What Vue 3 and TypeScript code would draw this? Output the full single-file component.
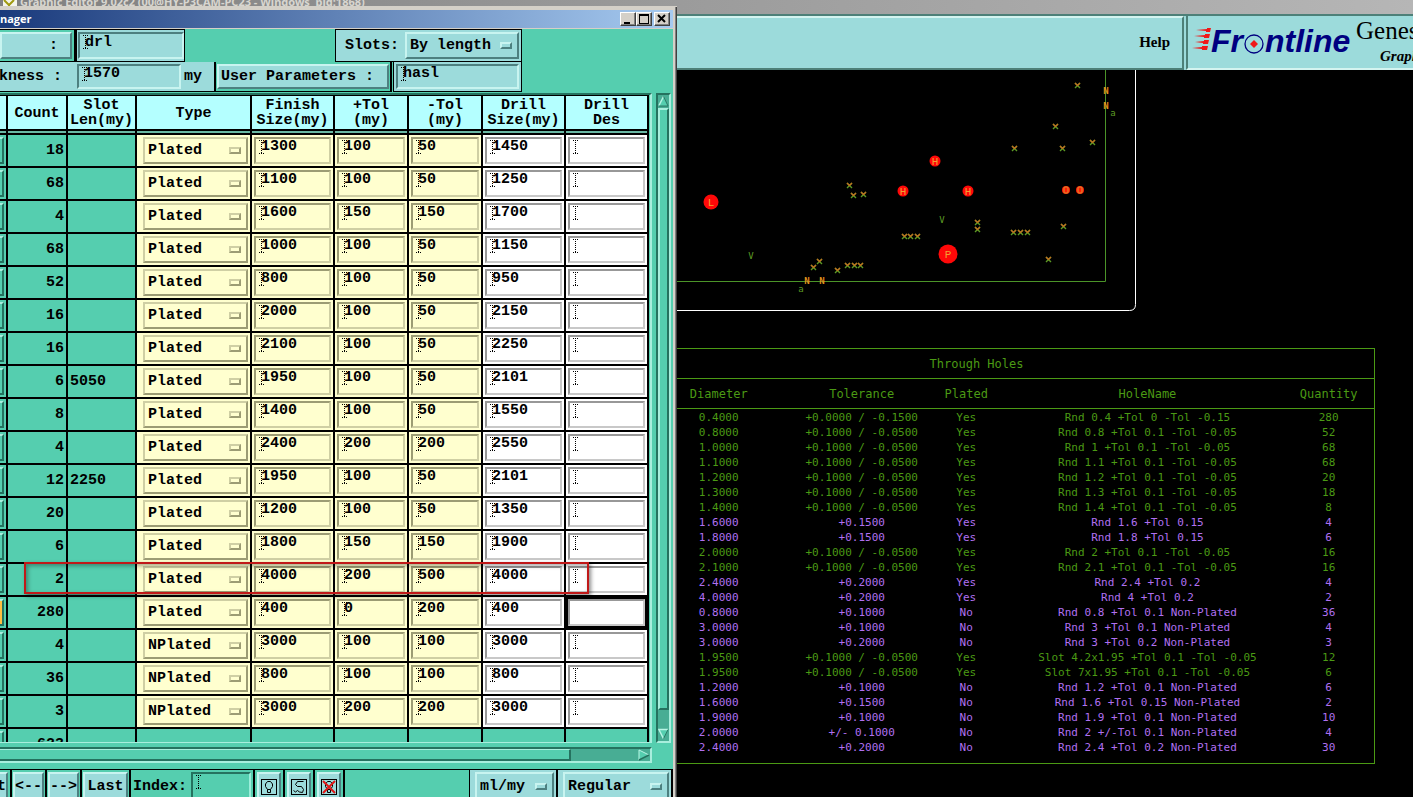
<script setup lang="ts">
import { ref } from 'vue'

interface Tool {
  count: number
  slot: string
  type: 'Plated' | 'NPlated'
  finish: string
  plus: string
  minus: string
  drill: string
}

interface Hole {
  dia: string
  tol: string
  plated: string
  name: string
  qty: number
  tone: 'green' | 'violet'
}

const tool = (count: number, slot: string, type: Tool['type'], finish: string, plus: string, minus: string, drill: string): Tool => ({
  count, slot, type, finish, plus, minus, drill,
})

const tools = ref<Tool[]>([
  tool(18, '', 'Plated', '1300', '100', '50', '1450'),
  tool(68, '', 'Plated', '1100', '100', '50', '1250'),
  tool(4, '', 'Plated', '1600', '150', '150', '1700'),
  tool(68, '', 'Plated', '1000', '100', '50', '1150'),
  tool(52, '', 'Plated', '800', '100', '50', '950'),
  tool(16, '', 'Plated', '2000', '100', '50', '2150'),
  tool(16, '', 'Plated', '2100', '100', '50', '2250'),
  tool(6, '5050', 'Plated', '1950', '100', '50', '2101'),
  tool(8, '', 'Plated', '1400', '100', '50', '1550'),
  tool(4, '', 'Plated', '2400', '200', '200', '2550'),
  tool(12, '2250', 'Plated', '1950', '100', '50', '2101'),
  tool(20, '', 'Plated', '1200', '100', '50', '1350'),
  tool(6, '', 'Plated', '1800', '150', '150', '1900'),
  tool(2, '', 'Plated', '4000', '200', '500', '4000'),
  tool(280, '', 'Plated', '400', '0', '200', '400'),
  tool(4, '', 'NPlated', '3000', '100', '100', '3000'),
  tool(36, '', 'NPlated', '800', '100', '100', '800'),
  tool(3, '', 'NPlated', '3000', '200', '200', '3000'),
])
const activeRow = 14

const headings = [['Count'], ['Slot', 'Len(my)'], ['Type'], ['Finish', 'Size(my)'], ['+Tol', '(my)'], ['-Tol', '(my)'], ['Drill', 'Size(my)'], ['Drill', 'Des']]

const hole = (dia: string, tol: string, plated: string, name: string, qty: number, tone: Hole['tone']): Hole => ({ dia, tol, plated, name, qty, tone })

const holes: Hole[] = [
  hole('0.4000', '+0.0000 / -0.1500', 'Yes', 'Rnd 0.4 +Tol 0 -Tol -0.15', 280, 'green'),
  hole('0.8000', '+0.1000 / -0.0500', 'Yes', 'Rnd 0.8 +Tol 0.1 -Tol -0.05', 52, 'green'),
  hole('1.0000', '+0.1000 / -0.0500', 'Yes', 'Rnd 1 +Tol 0.1 -Tol -0.05', 68, 'green'),
  hole('1.1000', '+0.1000 / -0.0500', 'Yes', 'Rnd 1.1 +Tol 0.1 -Tol -0.05', 68, 'green'),
  hole('1.2000', '+0.1000 / -0.0500', 'Yes', 'Rnd 1.2 +Tol 0.1 -Tol -0.05', 20, 'green'),
  hole('1.3000', '+0.1000 / -0.0500', 'Yes', 'Rnd 1.3 +Tol 0.1 -Tol -0.05', 18, 'green'),
  hole('1.4000', '+0.1000 / -0.0500', 'Yes', 'Rnd 1.4 +Tol 0.1 -Tol -0.05', 8, 'green'),
  hole('1.6000', '+0.1500', 'Yes', 'Rnd 1.6 +Tol 0.15', 4, 'violet'),
  hole('1.8000', '+0.1500', 'Yes', 'Rnd 1.8 +Tol 0.15', 6, 'violet'),
  hole('2.0000', '+0.1000 / -0.0500', 'Yes', 'Rnd 2 +Tol 0.1 -Tol -0.05', 16, 'green'),
  hole('2.1000', '+0.1000 / -0.0500', 'Yes', 'Rnd 2.1 +Tol 0.1 -Tol -0.05', 16, 'green'),
  hole('2.4000', '+0.2000', 'Yes', 'Rnd 2.4 +Tol 0.2', 4, 'violet'),
  hole('4.0000', '+0.2000', 'Yes', 'Rnd 4 +Tol 0.2', 2, 'violet'),
  hole('0.8000', '+0.1000', 'No', 'Rnd 0.8 +Tol 0.1 Non-Plated', 36, 'violet'),
  hole('3.0000', '+0.1000', 'No', 'Rnd 3 +Tol 0.1 Non-Plated', 4, 'violet'),
  hole('3.0000', '+0.2000', 'No', 'Rnd 3 +Tol 0.2 Non-Plated', 3, 'violet'),
  hole('1.9500', '+0.1000 / -0.0500', 'Yes', 'Slot 4.2x1.95 +Tol 0.1 -Tol -0.05', 12, 'green'),
  hole('1.9500', '+0.1000 / -0.0500', 'Yes', 'Slot 7x1.95 +Tol 0.1 -Tol -0.05', 6, 'green'),
  hole('1.2000', '+0.1000', 'No', 'Rnd 1.2 +Tol 0.1 Non-Plated', 6, 'violet'),
  hole('1.6000', '+0.1500', 'No', 'Rnd 1.6 +Tol 0.15 Non-Plated', 2, 'violet'),
  hole('1.9000', '+0.1000', 'No', 'Rnd 1.9 +Tol 0.1 Non-Plated', 10, 'violet'),
  hole('2.0000', '+/- 0.1000', 'No', 'Rnd 2 +/-Tol 0.1 Non-Plated', 4, 'violet'),
  hole('2.4000', '+0.2000', 'No', 'Rnd 2.4 +Tol 0.2 Non-Plated', 30, 'violet'),
]

/* Small drill crosses on the board, in board coordinates */
const crosses: [number, number][] = [
  [849, 185], [853, 195], [863, 194], [904, 236], [910, 236], [917, 236], [977, 222], [977, 229],
  [1013, 232], [1020, 232], [1027, 232], [819, 261], [813, 267], [837, 270], [847, 265], [854, 265],
  [860, 265], [1014, 148], [1077, 85], [1055, 126], [1062, 148], [1092, 142], [1063, 226], [1048, 259],
]
const bigHoles: [number, number, number, string][] = [
  [711, 202, 7, 'L'], [948, 254, 9, 'P'], [935, 161, 5, 'H'], [903, 191, 5, 'H'], [968, 191, 5, 'H'],
]
const slotEnds: [number, number][] = [[1066, 190], [1080, 190]]
const letters: [number, number, string, string][] = [
  [942, 220, 'V', 'mk'], [751, 256, 'V', 'mk'], [801, 289, 'a', 'mk'], [1113, 113, 'a', 'mk'],
  [807, 281, 'N', 'mk hot'], [822, 281, 'N', 'mk hot'], [1106, 91, 'N', 'mk hot'], [1106, 106, 'N', 'mk hot'],
]
</script>

<template>
  <div class="desktop">
    <div class="editor">
      <div class="editor-title">
        <svg width="14" height="8" viewBox="0 0 14 8"><rect width="14" height="8" fill="#f4f4ea" /><path d="M1 0l5 5 5-5M6 4v4" stroke="#a09a10" stroke-width="2" fill="none" /></svg>
        <span>Graphic Editor 9.02c2 (00@HY-P3CAM-PC23 - Windows&nbsp; pid:1868)</span>
      </div>
      <header class="menubar">
        <nav class="menu-panel"><button type="button" class="help">Help</button></nav>
        <div class="brand">
          <svg class="logo" width="164" height="44" viewBox="0 0 164 44" role="img" aria-label="Frontline">
            <g fill="#f01818">
              <path d="M8 10l11-1v-1h4l-1 4h-4v-1z" /><path d="M6 16l11-1v-1h5l-1 4h-5v-1z" />
              <path d="M7 22l9-1v-1h5l-1 4h-5v-1z" /><path d="M4 28l10-1v-1h6l-1 4h-5v-1z" />
            </g>
            <text x="23" y="32" class="word">Fr</text>
            <circle cx="66" cy="24" r="9" fill="#9cdbdb" stroke="#000080" stroke-width="1.3" />
            <path d="M66 20l4 4-4 4-4-4z" fill="#f01818" />
            <text x="77" y="32" class="word">ntline</text>
          </svg>
          <div class="product"><strong>Genesis</strong><em>Graphic</em></div>
        </div>
      </header>
      <main class="canvas">
        <svg class="board" width="736" height="278" viewBox="677 70 736 278">
          <path d="M677 310.5H1129.5Q1135.5 310.5 1135.5 304.5V70" stroke="#fff" fill="none" />
          <path d="M677 281.5H1105.5V70" stroke="#4b9428" fill="none" />
          <g v-for="(c, i) in crosses" :key="i" fill="none" stroke-width="1.4">
            <path :d="`M${c[0] - 2} ${c[1] + 3}l5-5M${c[0] - 2} ${c[1] - 2}l5 5`" stroke="#5c9a24" />
            <path :d="`M${c[0] - 2} ${c[1] - 2}l2.500 2.500l2.500-2.500`" stroke="#c07020" />
          </g>
          <g v-for="(h, i) in bigHoles" :key="'h' + i">
            <circle :cx="h[0]" :cy="h[1]" :r="h[2] + 0.5" fill="#ff0808" />
            <text :x="h[0]" :y="h[1] + 4" class="hole-id">{{ h[3] }}</text>
          </g>
          <g v-for="(s, i) in slotEnds" :key="'s' + i">
            <circle :cx="s[0]" :cy="s[1]" r="4" fill="#ff1c08" />
            <rect :x="s[0] - 2" :y="s[1] - 3" width="4" height="6" rx="1" fill="none" stroke="#d8982c" />
          </g>
          <text v-for="(l, i) in letters" :key="'l' + i" :x="l[0]" :y="l[1] + 3" :class="l[3]">{{ l[2] }}</text>
        </svg>
        <table class="holes">
          <colgroup><col class="h1" /><col class="h2" /><col class="h3" /><col class="h4" /><col class="h5" /></colgroup>
          <thead>
            <tr><th colspan="5" class="caption">Through Holes</th></tr>
            <tr><th class="first">Diameter</th><th>Tolerance</th><th>Plated</th><th>HoleName</th><th class="last">Quantity</th></tr>
          </thead>
          <tbody>
            <tr v-for="(h, i) in holes" :key="i" :class="h.tone">
              <td class="first">{{ h.dia }}</td><td>{{ h.tol }}</td><td>{{ h.plated }}</td><td>{{ h.name }}</td><td class="last">{{ h.qty }}</td>
            </tr>
          </tbody>
        </table>
      </main>
    </div>

    <section class="dialog">
      <div class="title">
        <span>nager</span>
        <div class="caps">
          <button type="button" aria-label="Minimize"><svg width="12" height="10" viewBox="0 0 12 10"><path d="M2 8h6v2H2z" /></svg></button>
          <button type="button" aria-label="Maximize"><svg width="12" height="10" viewBox="0 0 12 10"><path d="M1 0h10v10H1zM2 2v7h8V2z" fill-rule="evenodd" /></svg></button>
          <button type="button" aria-label="Close" class="close"><svg width="12" height="10" viewBox="0 0 12 10"><path d="M2 1l7 7M9 1l-7 7" stroke="#000" stroke-width="2" /></svg></button>
        </div>
      </div>

      <div class="form row-a">
        <div class="block job"><button type="button" class="push">:</button></div>
        <div class="block layer"><input class="entry aqua" value="drl" aria-label="Layer" /></div>
        <div class="block slots">
          <label for="slots">Slots:</label>
          <span class="option aqua"><select id="slots"><option>By length</option></select><i></i></span>
        </div>
      </div>
      <div class="form row-b">
        <div class="block thick">
          <label for="thick">kness :</label>
          <input id="thick" class="entry aqua" value="1570" />
          <span>my</span>
        </div>
        <div class="block teal params"><button type="button" class="push">User Parameters :</button></div>
        <div class="block finish"><input class="entry aqua" value="hasl" aria-label="User Parameters" /></div>
      </div>

      <div class="sheet">
        <div class="view">
          <table class="tools">
            <colgroup><col class="c0" /><col class="c1" /><col class="c2" /><col class="c3" /><col class="c4" /><col class="c5" /><col class="c5" /><col class="c4" /><col class="c4" /></colgroup>
            <thead>
              <tr>
                <th></th>
                <th v-for="(h, i) in headings" :key="i"><div v-for="line in h" :key="line">{{ line }}</div></th>
              </tr>
            </thead>
            <tbody>
              <tr v-for="(t, i) in tools" :key="i">
                <td class="edge"><button type="button" :class="{ on: i === activeRow }" :aria-label="`Tool ${i + 1}`"></button></td>
                <td class="count">{{ t.count }}</td>
                <td class="slot">{{ t.slot }}</td>
                <td class="cream type"><span class="option cream"><select v-model="t.type" :aria-label="`Type ${i + 1}`"><option>Plated</option><option>NPlated</option></select><i></i></span></td>
                <td class="cream"><input v-model="t.finish" class="entry cream" :aria-label="`Finish size ${i + 1}`" /></td>
                <td class="cream"><input v-model="t.plus" class="entry cream" :aria-label="`Plus tolerance ${i + 1}`" /></td>
                <td class="cream"><input v-model="t.minus" class="entry cream" :aria-label="`Minus tolerance ${i + 1}`" /></td>
                <td class="white"><input v-model="t.drill" class="entry white" :aria-label="`Drill size ${i + 1}`" /></td>
                <td class="white" :class="{ focus: i === activeRow }"><input class="entry white" :class="{ bare: i === activeRow }" :aria-label="`Drill designation ${i + 1}`" /></td>
              </tr>
              <tr>
                <td class="edge"><button type="button" aria-label="Total"></button></td>
                <td class="count">623</td>
                <td></td><td></td><td></td><td></td><td></td><td></td><td></td>
              </tr>
            </tbody>
          </table>
        </div>
        <div class="vbar">
          <button type="button" aria-label="Scroll up"><svg width="11" height="13" viewBox="0 0 12 13"><path d="M6 1L1 11h10z" fill="#55ceaf" /><path d="M6 1L1 11" stroke="#b8f4e4" stroke-width="1.5" /><path d="M1 11.5h10L6 1" stroke="#25725f" fill="none" /></svg></button>
          <div class="thumb"></div>
          <div class="rest"></div>
          <button type="button" aria-label="Scroll down"><svg width="11" height="13" viewBox="0 0 12 13"><path d="M1 1h10L6 11z" fill="#55ceaf" /><path d="M11 1H1l5 10" stroke="#b8f4e4" stroke-width="1.5" fill="none" /><path d="M6 11l5-10" stroke="#25725f" /></svg></button>
        </div>
      </div>
      <div class="hbar">
        <div class="thumb"></div>
        <div class="rest"></div>
        <button type="button" aria-label="Scroll right"><svg width="12" height="12" viewBox="0 0 12 12"><path d="M1 1v10l10-5z" fill="#55ceaf" /><path d="M1 11V1l10 5" stroke="#b8f4e4" fill="none" /><path d="M1 11l10-5" stroke="#25725f" stroke-width="1.5" /></svg></button>
      </div>

      <footer class="toolbar">
        <div class="block teal nav-t"><button type="button" class="push">t</button></div>
        <div class="block teal nav"><button type="button" class="push">&lt;--</button></div>
        <div class="block teal nav"><button type="button" class="push">--&gt;</button></div>
        <div class="block teal last-btn"><button type="button" class="push">Last</button></div>
        <div class="block teal index"><label for="index">Index:</label><input id="index" class="entry teal" /></div>
        <div class="block teal ico"><button type="button" class="push" aria-label="Highlight"><svg width="16" height="16" viewBox="0 0 16 16" fill="none" stroke="#000"><rect x=".5" y=".5" width="15" height="15" /><path d="M6.500 10.500L4.500 7.500V5L6.500 2.500h3L11.500 5v2.500L9.500 10.500zM6.500 10.500v3h3v-3" /></svg></button></div>
        <div class="block teal ico"><button type="button" class="push" aria-label="Pattern"><svg width="16" height="16" viewBox="0 0 16 16" fill="none" stroke="#000"><rect x=".5" y=".5" width="15" height="15" /><path d="M12.500 2.500h-6l-2 3 2 2h4l2 3-1 3M2.500 11.500l2 1.500 2-1.500 2 1.500 3 .5" /></svg></button></div>
        <div class="block teal ico"><button type="button" class="push" aria-label="Clear highlight"><svg width="16" height="16" viewBox="0 0 16 16" fill="none" stroke="#000"><rect x=".5" y=".5" width="15" height="15" /><path d="M6.500 10.500L4.500 7.500V5L6.500 2.500h3L11.500 5v2.500L9.500 10.500zM6.500 10.500v3h3v-3" /><path d="M2 2l12 12M14 2L2 14" stroke="#e01818" stroke-width="2" /></svg></button></div>
        <div class="gap"></div>
        <div class="block units"><span class="option aqua"><select aria-label="Units"><option>ml/my</option></select><i></i></span></div>
        <div class="block mode"><span class="option aqua"><select aria-label="Mode"><option>Regular</option></select><i></i></span></div>
      </footer>
      <div class="callout"></div>
    </section>
  </div>
</template>

<style>
body { background: #000; overflow: hidden; }
</style>

<style scoped>
* { box-sizing: border-box; }
.desktop { position: relative; height: 100vh; min-height: 500px; overflow: hidden; background: #000; }
button, input, select { margin: 0; padding: 0; font: inherit; color: #000; border-radius: 0; }

/* Editor window behind */
.editor { height: 100%; display: flex; flex-direction: column; }
.editor-title { height: 14px; flex: none; background: linear-gradient(90deg, #808080, #9c9c9c 50%, #b6b6b6); color: #d8d6d0; font: bold 11px/12px "Noto Sans", "Open Sans", sans-serif; white-space: nowrap; overflow: hidden; display: flex; gap: 3px; padding-left: 3px; }
.editor-title span { margin-top: -4px; }
.menubar { height: 56px; flex: none; display: flex; background: #9cdbdb; border-top: 2px solid #4d8078; }
.menu-panel { flex: 1; display: flex; justify-content: flex-end; align-items: center; border: 2px solid; border-color: #d4f4f0 #4d8078 #4d8078 #d4f4f0; margin-right: 2px; }
.help { border: 0; background: none; font: bold 15px/18px "Liberation Serif", serif; padding: 0 12px 2px; }
.brand { width: 227px; display: flex; overflow: hidden; border-left: 2px solid #4d8078; border-bottom: 2px solid #d4f4f0; }
.logo { flex: none; margin-top: 4px; }
.word { font: italic bold 32px "Liberation Sans", Arial, sans-serif; fill: #000080; }
.product { flex: none; display: flex; flex-direction: column; margin-left: 4px; }
.product strong { font: 25px/30px "Liberation Serif", serif; }
.product em { font: italic bold 15px/20px "Liberation Serif", serif; padding-left: 24px; }
.canvas { margin-left: 677px; }
.board { display: block; }
.hole-id { font: 11px "Liberation Mono", monospace; fill: #f0a030; text-anchor: middle; }
.mk { font: 9px "DejaVu Sans Mono", monospace; fill: #5c9a24; text-anchor: middle; }
.mk.hot { font-weight: bold; fill: #e0901c; }

.holes { width: calc(100% - 38px); table-layout: fixed; border-collapse: separate; border-spacing: 0; border: 1px solid #4b9a14; border-left: 0; padding-bottom: 8px; font: 11px/15px "DejaVu Sans Mono", monospace; color: #4b9a14; text-align: center; white-space: nowrap; }
.h1 { width: 17%; } .h2 { width: 19%; } .h3 { width: 11%; } .h4 { width: 41%; } .h5 { width: 12%; }
.holes th, .holes td { padding: 0; font-weight: normal; }
.holes th { height: 30px; padding-top: 2px; font-size: 12px; border-bottom: 1px solid #4b9a14; }
.holes .caption { padding-right: 98px; }
.holes .first { padding-right: 35px; }
.holes .last { padding-right: 7px; }
.holes td { height: 15px; }
.holes tbody tr:first-child td { height: 16px; padding-top: 1px; }
.holes .violet { color: #b070f0; }

/* Tool manager window */
.dialog { position: absolute; left: 0; top: 6px; bottom: 0; width: 677px; display: flex; flex-direction: column; padding-right: 4px; background: #55ceaf; border-top: 1px solid #d4d0c8; box-shadow: inset -1px 0 #404040, inset -2px 0 #808080, inset -4px 0 #d4d0c8; font: bold 15px/16px "Liberation Mono", "Courier New", monospace; color: #000; overflow: hidden; }
.title { flex: none; height: 22px; border-top: 3px solid #d4d0c8; border-bottom: 1px solid #d4d0c8; background: linear-gradient(90deg, #1a3a7c, #a6caf0); display: flex; justify-content: space-between; align-items: center; color: #fff; font: bold 11px/16px "Open Sans", "Noto Sans", sans-serif; }
.caps { display: flex; padding-right: 3px; }
.caps button { width: 16px; height: 14px; display: flex; align-items: center; justify-content: center; background: #d4d0c8; border: 1px solid; border-color: #fff #404040 #404040 #fff; box-shadow: inset -1px -1px #808080; }
.caps .close { margin-left: 2px; }

.form { flex: none; display: flex; }
.row-a { height: 33px; }
.row-b { height: 30px; }
.block { flex: none; display: flex; align-items: center; background: #9cdbdb; border: 1px solid #000; }
.block.teal { background: #55ceaf; }
.push { width: 100%; height: 100%; text-align: left; white-space: nowrap; border: 2px solid; border-color: #c8f4f0 #4d8080 #4d8080 #c8f4f0; background: #9cdbdb; padding: 0 2px; }
.job { width: 76px; border-left: 0; border-right-width: 2px; padding: 2px 2px 2px 0; background: #55ceaf; }
.job .push { text-align: right; padding-right: 12px; }
.layer { width: 109px; padding: 2px 0 2px 1px; }
.slots { width: 187px; margin-left: 150px; padding: 2px; justify-content: flex-end; gap: 6px; }
.slots .option { width: 114px; }
.thick { width: 216px; border-top: 0; border-left: 0; border-right-width: 2px; justify-content: flex-end; padding: 2px 12px 2px 0; }
.thick .entry { width: 104px; margin: 0 3px 0 15px; }
.thick label { white-space: nowrap; }
.params { width: 176px; border-width: 0 2px 1px 0; padding: 2px 1px; }
.finish { width: 129px; margin-left: 1px; border-top: 0; padding: 2px; }

.entry { display: block; width: 100%; height: 100%; border: 2px solid; outline: 0; padding: 0 0 8px 5px; font: inherit; line-height: 15px;
  background-repeat: no-repeat; background-position: 5px 1px, 3px 1px, 3px 14px; background-size: 1px 14px, 5px 1px, 5px 1px;
  background-image: repeating-linear-gradient(#000 0 1px, transparent 1px 2px), repeating-linear-gradient(90deg, #000 0 1px, transparent 1px 2px), repeating-linear-gradient(90deg, #000 0 1px, transparent 1px 2px); }
.form .entry { padding-bottom: 6px; }
.entry.aqua { background-color: #9cdbdb; border-color: #4d8080 #c8f4f0 #c8f4f0 #4d8080; }
.entry.teal { background-color: #55ceaf; border-color: #25725f #9ceedb #9ceedb #25725f; }
.entry.cream { background-color: #ffffcf; border-color: #9c9c74 #cfcfa4 #cfcfa4 #9c9c74; }
.entry.white { background-color: #fff; border-color: #989898 #c8c8c8 #c8c8c8 #989898; }
.entry.bare { background-image: none; }

.option { position: relative; display: block; width: 100%; height: 100%; }
.option select { appearance: none; display: block; width: 100%; height: 100%; padding-left: 3px; border: 2px solid; outline: 0; }
.option i { position: absolute; right: 7px; top: 50%; width: 12px; height: 7px; margin-top: -4px; border: 2px solid; }
.option.aqua select { background: #9cdbdb; border-color: #c8f4f0 #4d8080 #4d8080 #c8f4f0; }
.option.aqua i { border-color: #c8f4f0 #4d8080 #4d8080 #c8f4f0; }
.option.cream select { background: #ffffcf; border-color: #cfcfa4 #9c9c74 #9c9c74 #cfcfa4; }
.option.cream i { border-color: #cfcfa4 #9c9c74 #9c9c74 #cfcfa4; }

.sheet { flex: 1; min-height: 0; display: flex; padding-top: 1px; }
.view { width: 652px; overflow: hidden; border-top: 2px solid #25725f; border-right: 2px solid #a8eedd; border-bottom: 1px solid #a8eedd; }
.tools { width: 649px; table-layout: fixed; border-collapse: separate; border-spacing: 0; }
.c0 { width: 8px; } .c1 { width: 60px; } .c2 { width: 69px; } .c3 { width: 115px; } .c4 { width: 83px; } .c5 { width: 74px; }
.tools th { height: 40px; padding: 0 0 4px; line-height: 15px; font-weight: bold; border-right: 2px solid #000; white-space: nowrap;
  background: linear-gradient(to top, #000 0 2px, #6ab8a4 2px 4px, #000 4px 6px, #b4ffff 6px calc(100% - 1px), #000 0); }
.tools td { height: 33px; padding: 2px; border-right: 2px solid #000; border-bottom: 2px solid #000; }
.tools td.cream { background: #ffffcf; }
.tools td.white { background: #fff; }
.tools td .entry, .tools td .option { height: 27px; }
.tools td.type { padding-left: 6px; }
.tools td.edge { padding: 2px 2px 2px 0; }
.edge button { display: block; width: 4px; height: 27px; background: #55ceaf; border: solid; border-width: 2px 2px 2px 0; border-color: #a8eedd #25725f #25725f; }
.edge button.on { background: #ffc040; }
.tools td.count { text-align: right; }
.tools td.focus { background: #000; }

.vbar { width: 15px; margin-left: 4px; display: flex; flex-direction: column; background: #48ad94; border: 2px solid; border-color: #25725f #a8eedd #a8eedd #25725f; }
.vbar button, .hbar button { flex: none; display: block; border: 0; background: none; line-height: 0; }
.vbar .thumb { flex: 97; background: #55ceaf; border: 2px solid; border-color: #a8eedd #25725f #25725f #a8eedd; }
.vbar .rest { flex: 3; }
.hbar { flex: none; width: 652px; height: 16px; margin: 4px 0 6px; display: flex; background: #48ad94; border: solid; border-width: 2px 2px 2px 0; border-color: #25725f #a8eedd #a8eedd; }
.hbar .thumb { width: 571px; background: #55ceaf; border: solid; border-width: 1px 2px 2px 0; border-color: #a8eedd #25725f #25725f; }
.hbar .rest { flex: 1; }

.toolbar { flex: none; height: 28px; display: flex; border-top: 1px solid #000; overflow: hidden; }
.toolbar .block { height: 34px; padding: 2px; border-top: 0; border-left: 0; border-right-width: 2px; }
.toolbar .nav-t { width: 12px; padding-left: 0; }
.nav-t .push { padding: 0; border-left: 0; text-indent: -3px; overflow: hidden; }
.nav { width: 35px; }
.nav .push, .last-btn .push { padding: 0; text-align: center; }
.toolbar .nav, .toolbar .last-btn { padding: 2px 1px; }
.last-btn { width: 49px; }
.toolbar .index { width: 124px; justify-content: space-between; padding-left: 2px; }
.index .entry { width: 60px; }
.ico { width: 30px; }
.ico .push { display: flex; align-items: center; justify-content: center; padding: 0; }
.gap { flex: 1; }
.toolbar .units { width: 89px; padding-left: 5px; border-left: 1px solid #000; }
.toolbar .mode { width: 115px; padding-left: 5px; }

.callout { position: absolute; left: 24px; top: 555px; width: 565px; height: 32px; border: 2px solid #c01818; box-shadow: 2px 2px 4px rgba(0, 0, 0, .45), inset 2px 2px 4px rgba(0, 0, 0, .35); pointer-events: none; }
</style>
